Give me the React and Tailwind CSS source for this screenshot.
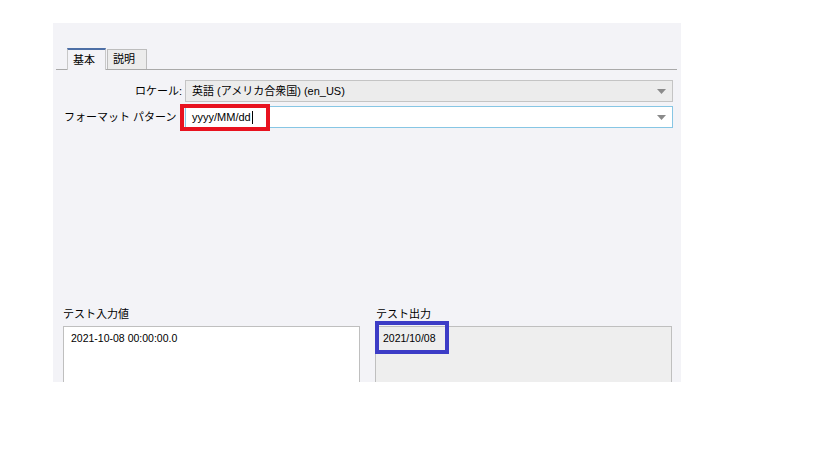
import React from "react";

const Caret = () => (
  <svg width="9" height="5" viewBox="0 0 9 5" className="shrink-0">
    <path d="M0 0 L9 0 L4.5 5 Z" fill="#8a8a8a" />
  </svg>
);

export default function App() {
  const font = { fontFamily: '"Liberation Sans", "Noto Sans CJK JP", sans-serif' };
  return (
    <div className="w-[819px] h-[460px] bg-white relative overflow-hidden text-black" style={font}>
      <div className="absolute left-[53px] top-[23px] w-[628px] h-[359px] bg-[#f3f3f7] overflow-hidden">
        {/* tabs */}
        <div className="mt-[25px] ml-[3px] mr-[4px] flex items-end border-b border-[#a9a9a9] h-[22px]">
          <div className="ml-[11px] w-[39px] h-[22px] bg-[#f3f3f7] border-t-2 border-t-[#4d6fa6] border-x border-x-[#c8c8c8] -mb-px flex items-center justify-center text-[11px] pr-[5px]">
            基本
          </div>
          <div className="ml-px w-[40px] h-[20px] bg-[#ececec] border border-[#bdbdbd] border-b-0 flex items-center pl-[5px] text-[11px]">
            説明
          </div>
        </div>
        {/* rows */}
        <div className="mt-[10px] flex flex-col gap-[4px] pr-[8px]">
          <div className="flex items-center h-[22px]">
            <div className="w-[131px] text-right text-[11px] pr-[2px]">ロケール:</div>
            <div className="flex-1 h-[22px] ml-px bg-[#ececec] border border-[#c4c4c4] flex items-center justify-between pl-[6px] pr-[6px] text-[11px]">
              <span>英語 (アメリカ合衆国) (en_US)</span>
              <Caret />
            </div>
          </div>
          <div className="flex items-center h-[22px]">
            <div className="w-[131px] pl-[11px] text-[11px] whitespace-nowrap">フォーマット パターン</div>
            <div className="flex-1 h-[22px] ml-px bg-white border border-[#87c6e4] flex items-center justify-between pl-[6px] pr-[6px] text-[11px]">
              <span className="flex items-center">yyyy/MM/dd<span className="inline-block w-px h-[13px] bg-black ml-px" /></span>
              <Caret />
            </div>
          </div>
        </div>
        {/* test section */}
        <div className="mt-[179px] flex gap-[15px] pl-[10px] pr-[9px]">
          <div className="flex-1 flex flex-col">
            <div className="text-[11px] h-[19px] leading-[14px]">テスト入力値</div>
            <div className="h-[80px] bg-white border border-[#bfbfbf] px-[7px] pt-[4px] text-[10.5px]">2021-10-08 00:00:00.0</div>
          </div>
          <div className="flex-1 flex flex-col">
            <div className="text-[11px] h-[19px] leading-[14px] pl-px">テスト出力</div>
            <div className="h-[80px] bg-[#eeeeee] border border-[#bfbfbf] px-[7px] pt-[4px] text-[10.5px]">2021/10/08</div>
          </div>
        </div>
      </div>
      {/* annotation boxes */}
      <div className="absolute left-[180px] top-[104px] w-[90px] h-[27px] border-4 border-[#e8121f]" />
      <div className="absolute left-[375px] top-[321px] w-[74px] h-[33px] border-4 border-[#3c3cc6]" />
    </div>
  );
}
